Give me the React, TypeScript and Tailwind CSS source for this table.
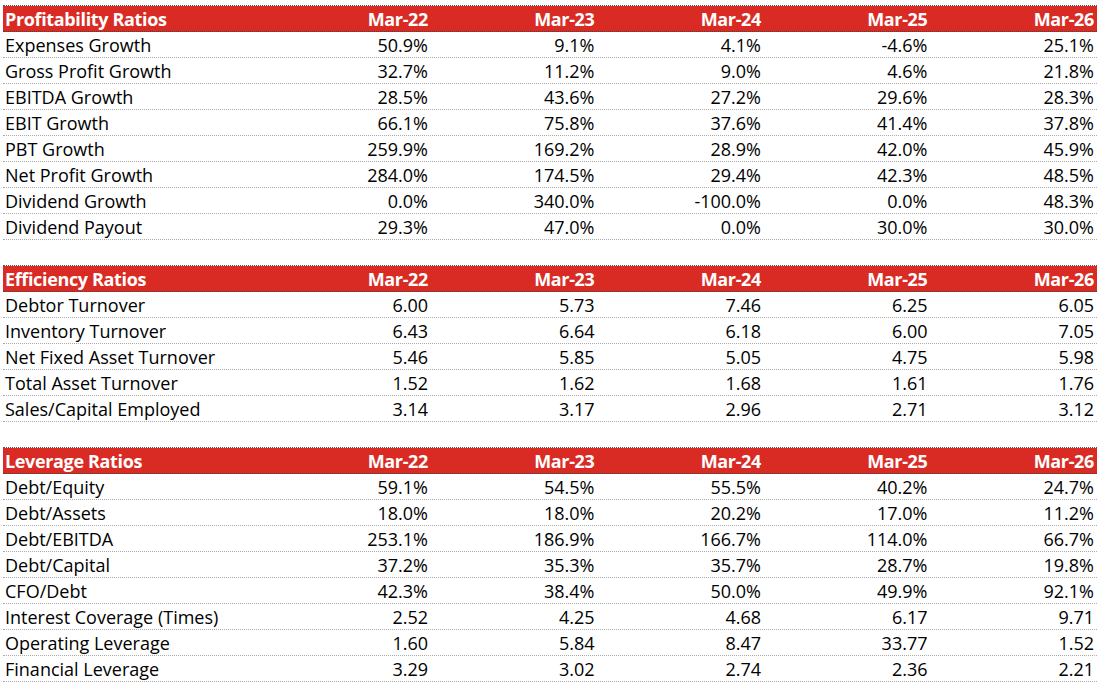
import React from "react";

type Section = { title: string; rows: [string, string[]][] };

const cols = ["Mar-22", "Mar-23", "Mar-24", "Mar-25", "Mar-26"];

const sections: Section[] = [
  {
    title: "Profitability Ratios",
    rows: [
      ["Expenses Growth", ["50.9%", "9.1%", "4.1%", "-4.6%", "25.1%"]],
      ["Gross Profit Growth", ["32.7%", "11.2%", "9.0%", "4.6%", "21.8%"]],
      ["EBITDA Growth", ["28.5%", "43.6%", "27.2%", "29.6%", "28.3%"]],
      ["EBIT Growth", ["66.1%", "75.8%", "37.6%", "41.4%", "37.8%"]],
      ["PBT Growth", ["259.9%", "169.2%", "28.9%", "42.0%", "45.9%"]],
      ["Net Profit Growth", ["284.0%", "174.5%", "29.4%", "42.3%", "48.5%"]],
      ["Dividend Growth", ["0.0%", "340.0%", "-100.0%", "0.0%", "48.3%"]],
      ["Dividend Payout", ["29.3%", "47.0%", "0.0%", "30.0%", "30.0%"]],
    ],
  },
  {
    title: "Efficiency Ratios",
    rows: [
      ["Debtor Turnover", ["6.00", "5.73", "7.46", "6.25", "6.05"]],
      ["Inventory Turnover", ["6.43", "6.64", "6.18", "6.00", "7.05"]],
      ["Net Fixed Asset Turnover", ["5.46", "5.85", "5.05", "4.75", "5.98"]],
      ["Total Asset Turnover", ["1.52", "1.62", "1.68", "1.61", "1.76"]],
      ["Sales/Capital Employed", ["3.14", "3.17", "2.96", "2.71", "3.12"]],
    ],
  },
  {
    title: "Leverage Ratios",
    rows: [
      ["Debt/Equity", ["59.1%", "54.5%", "55.5%", "40.2%", "24.7%"]],
      ["Debt/Assets", ["18.0%", "18.0%", "20.2%", "17.0%", "11.2%"]],
      ["Debt/EBITDA", ["253.1%", "186.9%", "166.7%", "114.0%", "66.7%"]],
      ["Debt/Capital", ["37.2%", "35.3%", "35.7%", "28.7%", "19.8%"]],
      ["CFO/Debt", ["42.3%", "38.4%", "50.0%", "49.9%", "92.1%"]],
      ["Interest Coverage (Times)", ["2.52", "4.25", "4.68", "6.17", "9.71"]],
      ["Operating Leverage", ["1.60", "5.84", "8.47", "33.77", "1.52"]],
      ["Financial Leverage", ["3.29", "3.02", "2.74", "2.36", "2.21"]],
    ],
  },
];

const grid = "grid grid-cols-[261.5px_repeat(5,1fr)] h-[26px] box-border";

export default function App() {
  return (
    <div
      className="w-[1099px] h-[685px] overflow-hidden bg-white text-black pl-[3px] pr-[2px]"
      style={{ fontFamily: "'Open Sans', 'Liberation Sans', sans-serif" }}
    >
      <div className="h-[6px] border-b border-dotted border-[#555]" />
      {sections.map((s, si) => (
        <div key={s.title}>
          {si > 0 && <div className="h-[26px] border-b border-dotted border-[#555]" />}
          <div className={`${grid} bg-[#d92b23] text-white font-bold border-b border-dotted border-[#444] text-[18px] tracking-[-0.35px] leading-none`}>
            <div className="flex items-end pb-[3px] pl-[2px]">{s.title}</div>
            {cols.map((c) => (
              <div key={c} className="flex items-end justify-end pb-[3px] pr-[3px]">
                {c}
              </div>
            ))}
          </div>
          {s.rows.map(([label, vals]) => (
            <div key={label} className={`${grid} border-b border-dotted border-[#aaaaaa] text-[18px] leading-none`}>
              <div className="flex items-end pb-[3px] pl-[2px]">{label}</div>
              {vals.map((v, i) => (
                <div key={i} className="flex items-end justify-end pb-[3px] pr-[3px]">
                  {v}
                </div>
              ))}
            </div>
          ))}
        </div>
      ))}
    </div>
  );
}
